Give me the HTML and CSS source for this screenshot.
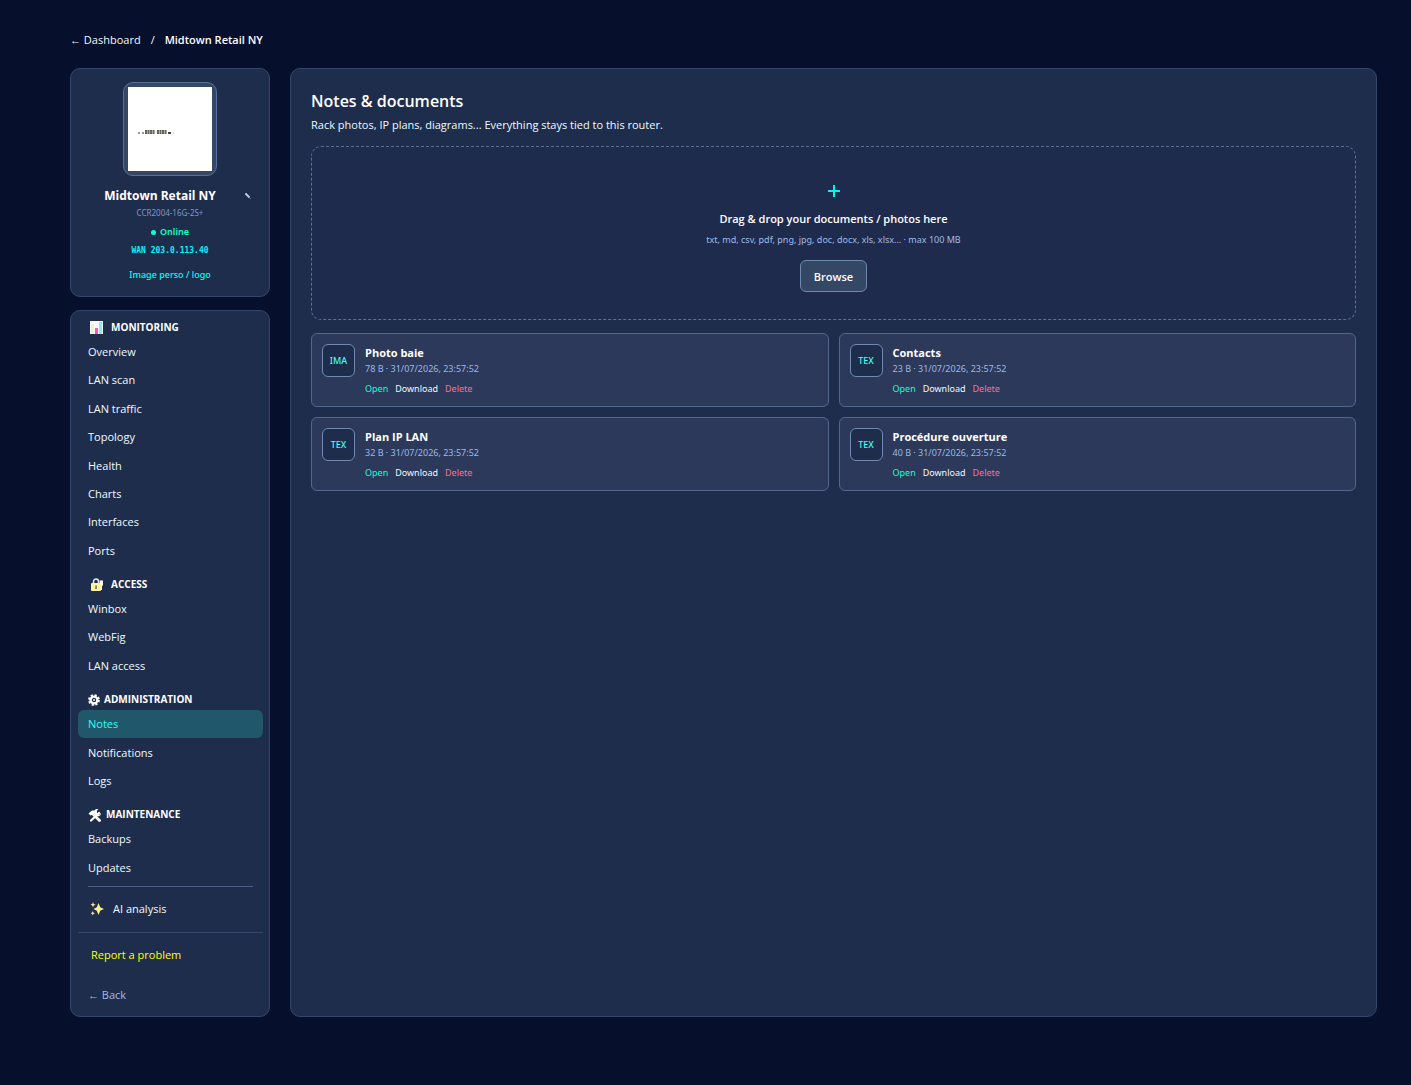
FILE: index.html
```html
<!DOCTYPE html>
<html lang="en">
<head>
<meta charset="utf-8">
<meta name="viewport" content="width=device-width, initial-scale=1">
<title>Midtown Retail NY – Notes</title>
<link rel="stylesheet" href="styles.css">
</head>
<body>
<div class="page">
  <nav class="crumbs" aria-label="Breadcrumb">
    <a href="#">← Dashboard</a><span>/</span><strong>Midtown Retail NY</strong>
  </nav>
  <div class="layout">
    <aside class="side">
      <section class="panel router">
        <div class="photo">
          <svg viewBox="0 0 84 84" role="img" aria-label="Router">
            <rect width="84" height="84" fill="#fff"/>
            <path d="M10 46h2M14 46h2" stroke="#777" stroke-width="1.5"/>
            <path d="M17 45h10M29 45h10" stroke="#5c5850" stroke-width="4" stroke-dasharray="2 .5"/>
            <path d="M17 45h22" stroke="#aaa" stroke-width=".5"/>
            <path d="M40 46h3" stroke="#444" stroke-width="2"/><path d="M45 46h1" stroke="#bbb" stroke-width="1"/>
          </svg>
        </div>
        <div class="name-row">
          <h1>Midtown Retail NY</h1>
          <button class="edit" type="button" aria-label="Rename"><svg viewBox="0 0 8 8"><path d="M1.500 1.500L5.500 5.500" stroke="#b7c8e8" stroke-width="2"/><path d="M1 1.300L2 2M5.500 5.800L6.500 6.500" stroke="#8ea3cb"/></svg></button>
        </div>
        <p class="model">CCR2004-16G-2S+</p>
        <p class="status"><i class="dot"></i>Online</p>
        <p class="wan">WAN 203.0.113.40</p>
        <button class="logo-btn" type="button">Image perso / logo</button>
      </section>
      <nav class="panel menu" aria-label="Router sections">
        <section class="group">
          <h2><svg class="ico wide" viewBox="0 0 14 14"><rect x="0" y="0" width="13" height="13" fill="#f7fbff"/><path d="M1 3h3v10H1z" fill="#eef5c4"/><path d="M5 7h3v6H5z" fill="#ff4fc0"/><path d="M9 1h3v12H9z" fill="#7df0f5"/></svg>MONITORING</h2>
          <a href="#">Overview</a>
          <a href="#">LAN scan</a>
          <a href="#">LAN traffic</a>
          <a href="#">Topology</a>
          <a href="#">Health</a>
          <a href="#">Charts</a>
          <a href="#">Interfaces</a>
          <a href="#">Ports</a>
        </section>
        <section class="group">
          <h2><svg class="ico wide" viewBox="0 0 14 14"><path d="M3.500 6V3.500a2.500 2.500 0 0 1 5 0V6" fill="none" stroke="#e6e9ef" stroke-width="1.500"/><path d="M9.500 2.500h3.500v5h-1V12h-2z" fill="#fff"/><rect x="1" y="5" width="10" height="8" rx="1" fill="#fff39a"/><path d="M5.300 7.500h1.500V11H5.300z" fill="#6f5a62"/></svg>ACCESS</h2>
          <a href="#">Winbox</a>
          <a href="#">WebFig</a>
          <a href="#">LAN access</a>
        </section>
        <section class="group">
          <h2><svg class="ico gear" viewBox="0 0 12 12"><circle cx="6" cy="6" r="5" fill="none" stroke="#fff" stroke-width="1.800" stroke-dasharray="2.200 1.727"/><circle cx="6" cy="6" r="3.400" fill="none" stroke="#fff" stroke-width="2.400"/><circle cx="6" cy="6" r="1" fill="#fff"/></svg>ADMINISTRATION</h2>
          <a href="#" class="active" aria-current="page">Notes</a>
          <a href="#">Notifications</a>
          <a href="#">Logs</a>
        </section>
        <section class="group">
          <h2><svg class="ico tools" viewBox="0 0 14 13"><path d="M3 11.500L11 4" stroke="#fff" stroke-width="2.200" stroke-linecap="round"/><path d="M4 4l7.500 7.500" stroke="#fff" stroke-width="2.800" stroke-linecap="round"/><path d="M.5 4.500L4 1.500h4L6 5 2.500 6.500z" fill="#fff"/><path d="M9 1.500v3l2 1.200L13 4a3 3 0 0 1-5 2.500A3.500 3.500 0 0 1 10.500 0z" fill="#fff"/></svg>MAINTENANCE</h2>
          <a href="#">Backups</a>
          <a href="#">Updates</a>
        </section>
        <div class="ai"><a href="#"><svg class="ico wide" viewBox="0 0 14 14"><path d="M8.500 1L10.200 5.300 14 7l-3.800 1.700L8.500 13 6.800 8.700 3.500 7l3.300-1.700z" fill="#fff08a"/><path d="M3 0l.7 2 2 .7-2 .8L3 5.500l-.7-2-1.800-.8 1.800-.7z" fill="#ffe9a0"/><path d="M2.800 9l.6 1.500L5 11.200l-1.600.7-.6 1.600-.7-1.600-1.600-.7 1.600-.7z" fill="#ffd9a8"/></svg>AI analysis</a></div>
        <div class="report"><button type="button">Report a problem</button></div>
        <a class="back" href="#">← Back</a>
      </nav>
    </aside>
    <main class="panel content">
      <h2>Notes &amp; documents</h2>
      <p class="lead">Rack photos, IP plans, diagrams... Everything stays tied to this router.</p>
      <section class="drop">
        <svg class="plus" viewBox="0 0 12 12"><path d="M6 0v12M0 6h12" stroke="#00f5ee" stroke-width="2"/></svg>
        <strong>Drag &amp; drop your documents / photos here</strong>
        <p>txt, md, csv, pdf, png, jpg, doc, docx, xls, xlsx... · max 100 MB</p>
        <button type="button">Browse</button>
      </section>
      <div class="docs">
        <article class="doc">
          <span class="kind">IMA</span>
          <div><h3>Photo baie</h3><p>78 B · 31/07/2026, 23:57:52</p>
          <div class="acts"><a class="open" href="#">Open</a><a href="#">Download</a><button type="button">Delete</button></div></div>
        </article>
        <article class="doc">
          <span class="kind">TEX</span>
          <div><h3>Contacts</h3><p>23 B · 31/07/2026, 23:57:52</p>
          <div class="acts"><a class="open" href="#">Open</a><a href="#">Download</a><button type="button">Delete</button></div></div>
        </article>
        <article class="doc">
          <span class="kind">TEX</span>
          <div><h3>Plan IP LAN</h3><p>32 B · 31/07/2026, 23:57:52</p>
          <div class="acts"><a class="open" href="#">Open</a><a href="#">Download</a><button type="button">Delete</button></div></div>
        </article>
        <article class="doc">
          <span class="kind">TEX</span>
          <div><h3>Procédure ouverture</h3><p>40 B · 31/07/2026, 23:57:52</p>
          <div class="acts"><a class="open" href="#">Open</a><a href="#">Download</a><button type="button">Delete</button></div></div>
        </article>
      </div>
    </main>
  </div>
</div>
</body>
</html>
```
FILE: styles.css
```css
*, *::before, *::after { box-sizing: border-box; }

body {
  margin: 0;
  min-height: 100vh;
  background: #06102c;
  color: #eefaff;
  font: 11px/17px "Segoe UI", "Open Sans", "Noto Sans", sans-serif;
}

h1, h2, h3, p { margin: 0; }
a { color: inherit; text-decoration: none; }
button { font: inherit; color: inherit; background: none; border: 0; padding: 0; cursor: pointer; }
svg { display: block; }

.page {
  display: flex;
  flex-direction: column;
  min-height: 100vh;
  padding: 31px 34px 68px 70px;
}

.crumbs { display: flex; gap: 10px; margin-bottom: 20px; }
.crumbs strong { color: #fff; font-weight: 600; }

.layout {
  flex: 1;
  display: grid;
  grid-template-columns: 200px minmax(0, 1fr);
  gap: 20px;
}

.panel {
  background: #1f2d4d;
  border: 1px solid #33466a;
  border-radius: 10px;
}

.side { display: flex; flex-direction: column; gap: 13px; }

/* Small print is set in a slightly wider face */
.model, .status, .logo-btn, .drop p, .kind, .doc p, .acts {
  font-family: "Segoe UI", "Noto Sans", sans-serif;
}

/* Router summary */
.router {
  display: flex;
  flex-direction: column;
  align-items: center;
  padding: 13px;
  text-align: center;
}
.photo {
  width: 94px;
  height: 94px;
  padding: 4px;
  background: #344866;
  border: 1px solid #56709a;
  border-radius: 10px;
}
.name-row {
  display: flex;
  align-items: center;
  width: 100%;
  margin-top: 11px;
}
.name-row h1 { flex: 1; color: #fff; font-size: 12px; line-height: 18px; font-weight: 700; }
.edit { padding: 0 4px 0 8px; }
.edit svg { width: 8px; height: 8px; }
.model { color: #8098c6; font-size: 8px; line-height: 16px; }
.status {
  display: flex;
  align-items: center;
  gap: 4px;
  margin-top: 2px;
  color: #0fffc4;
  font-size: 9px;
  line-height: 18px;
  font-weight: 600;
}
.dot { width: 5px; height: 5px; border-radius: 50%; background: #0fffd0; }
.wan {
  color: #00f5ff;
  font: 700 8px/20px Consolas, "DejaVu Sans Mono", monospace;
}
.logo-btn { margin-top: 6px; color: #00fff2; font-size: 9px; line-height: 16px; font-weight: 500; }

/* Section menu */
.menu {
  flex: 1;
  display: flex;
  flex-direction: column;
  padding: 7px 6px 8px 7px;
}
.group { display: contents; }
.group h2 {
  display: flex;
  align-items: center;
  gap: 7px;
  padding: 0 10px;
  color: #fff;
  font-size: 10px;
  line-height: 18px;
  font-weight: 700;
}
.group + .group h2 { margin-top: 10px; }
.group a {
  flex: 1 0 auto;
  padding: 5px 10px;
  margin-bottom: 1px;
  border-radius: 6px;
}
.group h2 + a { margin-top: 2px; }
.group .active { background: #20576b; color: #2dfff5; }

.ico { flex: none; width: 14px; height: 14px; }
.group .ico { margin-top: 2px; }
.wide { margin-left: 2px; }
.gear { width: 12px; height: 12px; margin-right: -3px; }
.tools { width: 14px; height: 13px; margin-right: -3px; }

.ai { margin: 4px 10px 0; padding: 13px 0 15px; border-top: 1px solid #4a5e86; }
.ai a { display: flex; align-items: center; gap: 9px; }
.report { padding: 13px 13px 13px; border-top: 1px solid #36496d; }
.back { padding: 10px 10px 5px; color: #9fbce6; }
.report button { color: #ffff00; }

/* Notes */
.content { padding: 20px; }
.content > h2 { color: #fff; font-size: 16px; line-height: 24px; font-weight: 600; }
.lead { line-height: 20px; margin: 2px 0 11px; }
.drop {
  display: flex;
  flex-direction: column;
  align-items: center;
  padding: 38px 20px 27px;
  border: 1px dashed #5c7096;
  border-radius: 10px;
  background: #1f2b4d;
}
.plus { width: 12px; height: 12px; }
.drop strong { margin-top: 12px; color: #fff; line-height: 20px; font-weight: 600; }
.drop p { margin: 3px 0 12px; color: #9dbbe8; font-size: 9px; line-height: 16px; }
.drop button {
  padding: 7px 13px 6px;
  color: #fff;
  font-weight: 600;
  background: #344866;
  border: 1px solid #6e88ae;
  border-radius: 6px;
}

.docs {
  display: grid;
  grid-template-columns: repeat(2, minmax(0, 1fr));
  gap: 10px;
  margin-top: 13px;
}
.doc {
  display: flex;
  gap: 10px;
  padding: 10px 10px 9px;
  background: #2c395b;
  border: 1px solid #51678e;
  border-radius: 6px;
}
.kind {
  flex: none;
  display: grid;
  place-items: center;
  width: 33px;
  height: 33px;
  color: #3dfff0;
  font-size: 9px;
  font-weight: 500;
  background: #1f2d4d;
  border: 1px solid #7189b0;
  border-radius: 6px;
}
.doc h3 { color: #fff; font-size: 11px; line-height: 17px; font-weight: 700; }
.doc p { color: #9db8e4; font-size: 9px; line-height: 15px; }
.acts { display: flex; gap: 7px; margin-top: 5px; font-size: 9px; line-height: 16px; }
.acts .open { color: #0fffd0; }
.acts button { color: #ff6c93; }
```
